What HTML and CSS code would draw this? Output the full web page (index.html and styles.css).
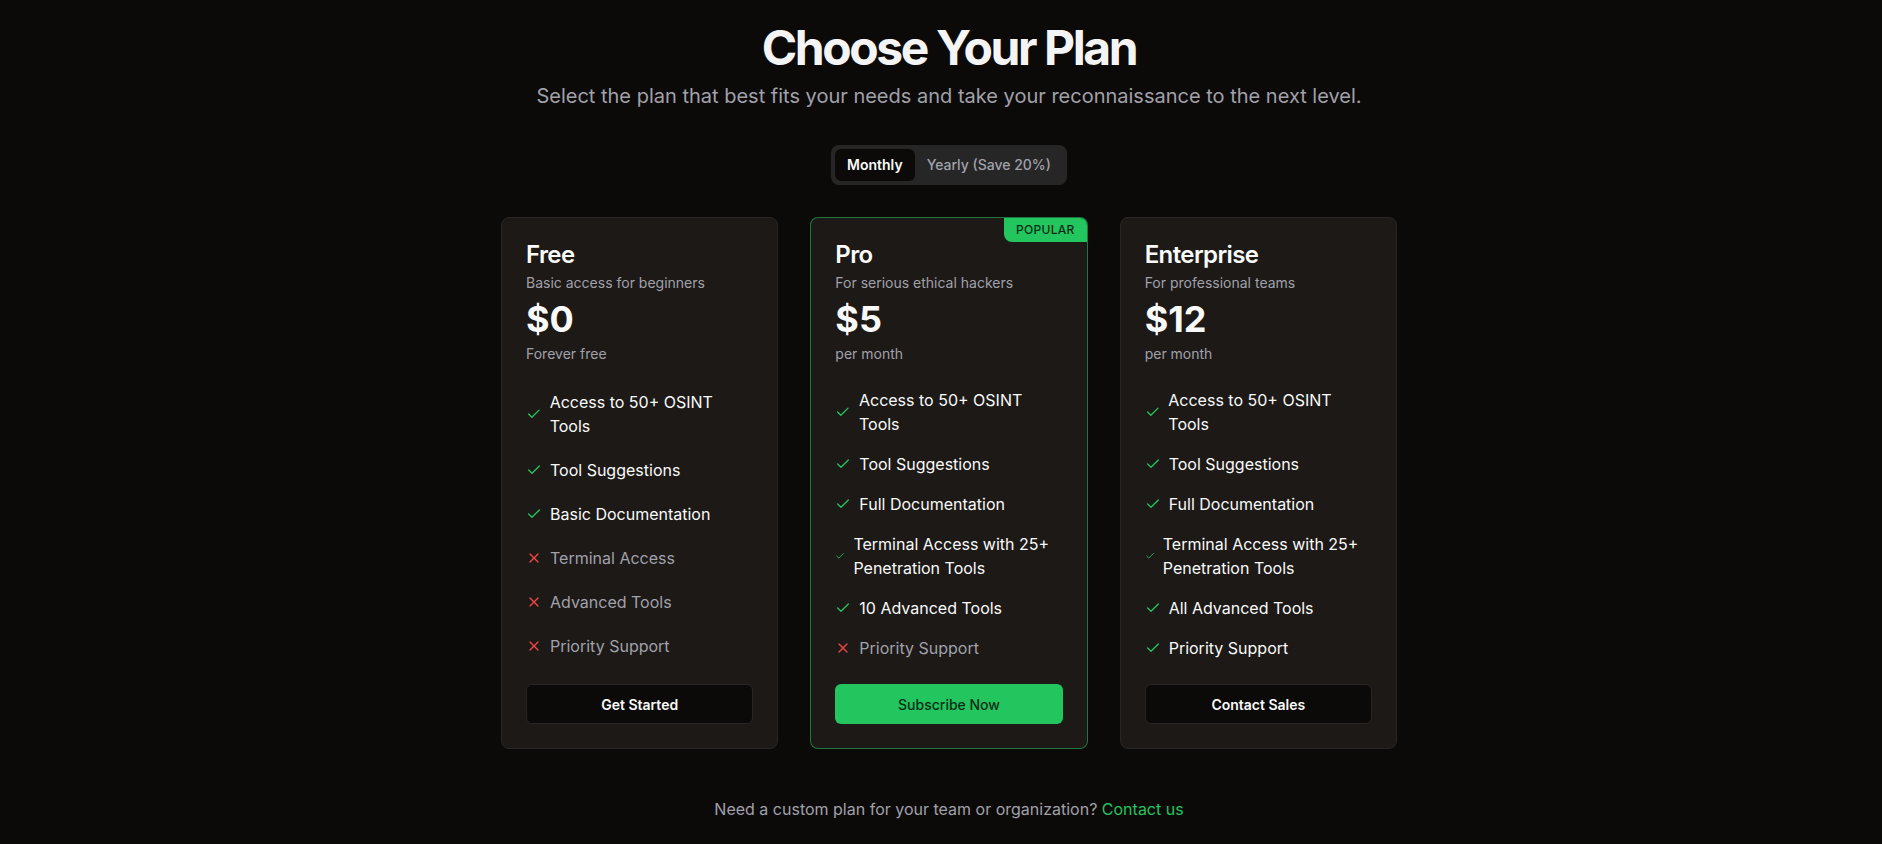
FILE: index.html
```html
<!DOCTYPE html>
<html lang="en">
<head>
<meta charset="utf-8">
<title>Choose Your Plan</title>
<link rel="stylesheet" href="styles.css">
</head>
<body>
<main class="page">
  <header class="intro">
    <h1 class="title">Choose Your Plan</h1>
    <p class="subtitle">Select the plan that best fits your needs and take your reconnaissance to the next level.</p>
  </header>

  <div class="toggle-wrap">
    <div class="toggle">
      <button class="toggle-btn active">Monthly</button>
      <button class="toggle-btn">Yearly (Save 20%)</button>
    </div>
  </div>

  <div class="plans">
    <section class="card">
      <div class="card-header">
        <h2 class="plan-name">Free</h2>
        <p class="plan-desc">Basic access for beginners</p>
        <div class="price">$0</div>
        <p class="period">Forever free</p>
      </div>
      <ul class="features">
        <li class="feature"><svg class="ico ok" viewBox="0 0 24 24" fill="none" stroke="currentColor" stroke-width="2" stroke-linecap="round" stroke-linejoin="round"><path d="M20 6 9 17l-5-5"/></svg><span>Access to 50+ OSINT Tools</span></li>
        <li class="feature"><svg class="ico ok" viewBox="0 0 24 24" fill="none" stroke="currentColor" stroke-width="2" stroke-linecap="round" stroke-linejoin="round"><path d="M20 6 9 17l-5-5"/></svg><span>Tool Suggestions</span></li>
        <li class="feature"><svg class="ico ok" viewBox="0 0 24 24" fill="none" stroke="currentColor" stroke-width="2" stroke-linecap="round" stroke-linejoin="round"><path d="M20 6 9 17l-5-5"/></svg><span>Basic Documentation</span></li>
        <li class="feature off"><svg class="ico no" viewBox="0 0 24 24" fill="none" stroke="currentColor" stroke-width="2" stroke-linecap="round" stroke-linejoin="round"><path d="M18 6 6 18"/><path d="m6 6 12 12"/></svg><span>Terminal Access</span></li>
        <li class="feature off"><svg class="ico no" viewBox="0 0 24 24" fill="none" stroke="currentColor" stroke-width="2" stroke-linecap="round" stroke-linejoin="round"><path d="M18 6 6 18"/><path d="m6 6 12 12"/></svg><span>Advanced Tools</span></li>
        <li class="feature off"><svg class="ico no" viewBox="0 0 24 24" fill="none" stroke="currentColor" stroke-width="2" stroke-linecap="round" stroke-linejoin="round"><path d="M18 6 6 18"/><path d="m6 6 12 12"/></svg><span>Priority Support</span></li>
      </ul>
      <div class="card-footer"><button class="btn btn-dark">Get Started</button></div>
    </section>

    <section class="card featured">
      <span class="badge">POPULAR</span>
      <div class="card-header">
        <h2 class="plan-name">Pro</h2>
        <p class="plan-desc">For serious ethical hackers</p>
        <div class="price">$5</div>
        <p class="period">per month</p>
      </div>
      <ul class="features">
        <li class="feature"><svg class="ico ok" viewBox="0 0 24 24" fill="none" stroke="currentColor" stroke-width="2" stroke-linecap="round" stroke-linejoin="round"><path d="M20 6 9 17l-5-5"/></svg><span>Access to 50+ OSINT Tools</span></li>
        <li class="feature"><svg class="ico ok" viewBox="0 0 24 24" fill="none" stroke="currentColor" stroke-width="2" stroke-linecap="round" stroke-linejoin="round"><path d="M20 6 9 17l-5-5"/></svg><span>Tool Suggestions</span></li>
        <li class="feature"><svg class="ico ok" viewBox="0 0 24 24" fill="none" stroke="currentColor" stroke-width="2" stroke-linecap="round" stroke-linejoin="round"><path d="M20 6 9 17l-5-5"/></svg><span>Full Documentation</span></li>
        <li class="feature"><svg class="ico ok" viewBox="0 0 24 24" fill="none" stroke="currentColor" stroke-width="2" stroke-linecap="round" stroke-linejoin="round"><path d="M20 6 9 17l-5-5"/></svg><span>Terminal Access with 25+ Penetration Tools</span></li>
        <li class="feature"><svg class="ico ok" viewBox="0 0 24 24" fill="none" stroke="currentColor" stroke-width="2" stroke-linecap="round" stroke-linejoin="round"><path d="M20 6 9 17l-5-5"/></svg><span>10 Advanced Tools</span></li>
        <li class="feature off"><svg class="ico no" viewBox="0 0 24 24" fill="none" stroke="currentColor" stroke-width="2" stroke-linecap="round" stroke-linejoin="round"><path d="M18 6 6 18"/><path d="m6 6 12 12"/></svg><span>Priority Support</span></li>
      </ul>
      <div class="card-footer"><button class="btn btn-green">Subscribe Now</button></div>
    </section>

    <section class="card">
      <div class="card-header">
        <h2 class="plan-name">Enterprise</h2>
        <p class="plan-desc">For professional teams</p>
        <div class="price">$12</div>
        <p class="period">per month</p>
      </div>
      <ul class="features">
        <li class="feature"><svg class="ico ok" viewBox="0 0 24 24" fill="none" stroke="currentColor" stroke-width="2" stroke-linecap="round" stroke-linejoin="round"><path d="M20 6 9 17l-5-5"/></svg><span>Access to 50+ OSINT Tools</span></li>
        <li class="feature"><svg class="ico ok" viewBox="0 0 24 24" fill="none" stroke="currentColor" stroke-width="2" stroke-linecap="round" stroke-linejoin="round"><path d="M20 6 9 17l-5-5"/></svg><span>Tool Suggestions</span></li>
        <li class="feature"><svg class="ico ok" viewBox="0 0 24 24" fill="none" stroke="currentColor" stroke-width="2" stroke-linecap="round" stroke-linejoin="round"><path d="M20 6 9 17l-5-5"/></svg><span>Full Documentation</span></li>
        <li class="feature"><svg class="ico ok" viewBox="0 0 24 24" fill="none" stroke="currentColor" stroke-width="2" stroke-linecap="round" stroke-linejoin="round"><path d="M20 6 9 17l-5-5"/></svg><span>Terminal Access with 25+ Penetration Tools</span></li>
        <li class="feature"><svg class="ico ok" viewBox="0 0 24 24" fill="none" stroke="currentColor" stroke-width="2" stroke-linecap="round" stroke-linejoin="round"><path d="M20 6 9 17l-5-5"/></svg><span>All Advanced Tools</span></li>
        <li class="feature"><svg class="ico ok" viewBox="0 0 24 24" fill="none" stroke="currentColor" stroke-width="2" stroke-linecap="round" stroke-linejoin="round"><path d="M20 6 9 17l-5-5"/></svg><span>Priority Support</span></li>
      </ul>
      <div class="card-footer"><button class="btn btn-dark">Contact Sales</button></div>
    </section>
  </div>

  <p class="footnote">Need a custom plan for your team or organization? <a class="link" href="#">Contact us</a></p>
</main>
</body>
</html>
```

FILE: styles.css
```css
* { box-sizing: border-box; }

html, body {
  margin: 0;
  background: #0c0a09;
}

body {
  font-family: "Inter", "Noto Sans", "Liberation Sans", sans-serif;
  color: #fafafa;
}

.page {
  padding: 24px 0 0 16px;
}

.intro {
  text-align: center;
}

.title {
  margin: 0;
  font-size: 48px;
  line-height: 48px;
  font-weight: 700;
  letter-spacing: -0.05em;
  color: #f4f4f5;
}

.subtitle {
  margin: 10px 0 0;
  font-size: 20px;
  line-height: 28px;
  color: #a1a1aa;
}

.toggle-wrap {
  display: flex;
  justify-content: center;
  margin-top: 35px;
}

.toggle {
  display: flex;
  padding: 4px;
  background: #262626;
  border-radius: 8px;
}

.toggle-btn {
  font-family: inherit;
  font-size: 14px;
  line-height: 20px;
  font-weight: 500;
  padding: 6px 12px;
  border: 0;
  background: transparent;
  color: #a1a1aa;
  border-radius: 6px;
}

.toggle-btn.active {
  background: #0c0a09;
  color: #fafafa;
  font-weight: 600;
}

.plans {
  display: grid;
  grid-template-columns: repeat(3, 1fr);
  gap: 32px;
  max-width: 896px;
  margin: 32px auto 0;
}

.card {
  position: relative;
  display: flex;
  flex-direction: column;
  background: #1c1917;
  border: 1px solid #292524;
  border-radius: 8px;
  overflow: hidden;
}

.card.featured {
  border-color: rgba(34, 197, 94, 0.55);
}

.badge {
  position: absolute;
  top: 0;
  right: 0;
  background: #22c55e;
  color: #052e16;
  font-size: 12px;
  line-height: 16px;
  font-weight: 500;
  letter-spacing: 0.025em;
  padding: 4px 12px;
  border-bottom-left-radius: 8px;
}

.card-header {
  display: flex;
  flex-direction: column;
  gap: 6px;
  padding: 25px 24px 24px;
}

.plan-name {
  margin: 0;
  font-size: 24px;
  line-height: 24px;
  font-weight: 600;
  letter-spacing: -0.025em;
  color: #fafafa;
}

.plan-desc,
.period {
  margin: 0;
  font-size: 14px;
  line-height: 20px;
  color: #a1a1aa;
}

.price {
  font-size: 36px;
  line-height: 40px;
  font-weight: 700;
  color: #fafafa;
}

.period {
  margin-top: -1px;
}

.features {
  flex: 1;
  display: grid;
  gap: 16px;
  list-style: none;
  margin: 0;
  padding: 0 24px 24px;
}

.feature {
  display: flex;
  align-items: center;
  font-size: 16px;
  line-height: 24px;
  color: #fafafa;
}

.feature.off {
  color: #a1a1aa;
}

.ico {
  width: 16px;
  height: 16px;
  min-width: 0;
  margin-right: 8px;
}

.ico.ok { color: #22c55e; }
.ico.no { color: #ef4444; }

.card-footer {
  padding: 0 24px 24px;
}

.btn {
  display: block;
  width: 100%;
  height: 40px;
  border-radius: 6px;
  font-family: inherit;
  font-size: 14px;
  font-weight: 600;
}

.btn-dark {
  background: #0c0a09;
  border: 1px solid #292524;
  color: #fafafa;
}

.btn-green {
  background: #22c55e;
  border: 0;
  color: #052e16;
  font-weight: 500;
}

.footnote {
  margin: 48px 0 0;
  text-align: center;
  font-size: 16px;
  line-height: 24px;
  color: #a1a1aa;
}

.link {
  color: #22c55e;
  text-decoration: none;
}
```
